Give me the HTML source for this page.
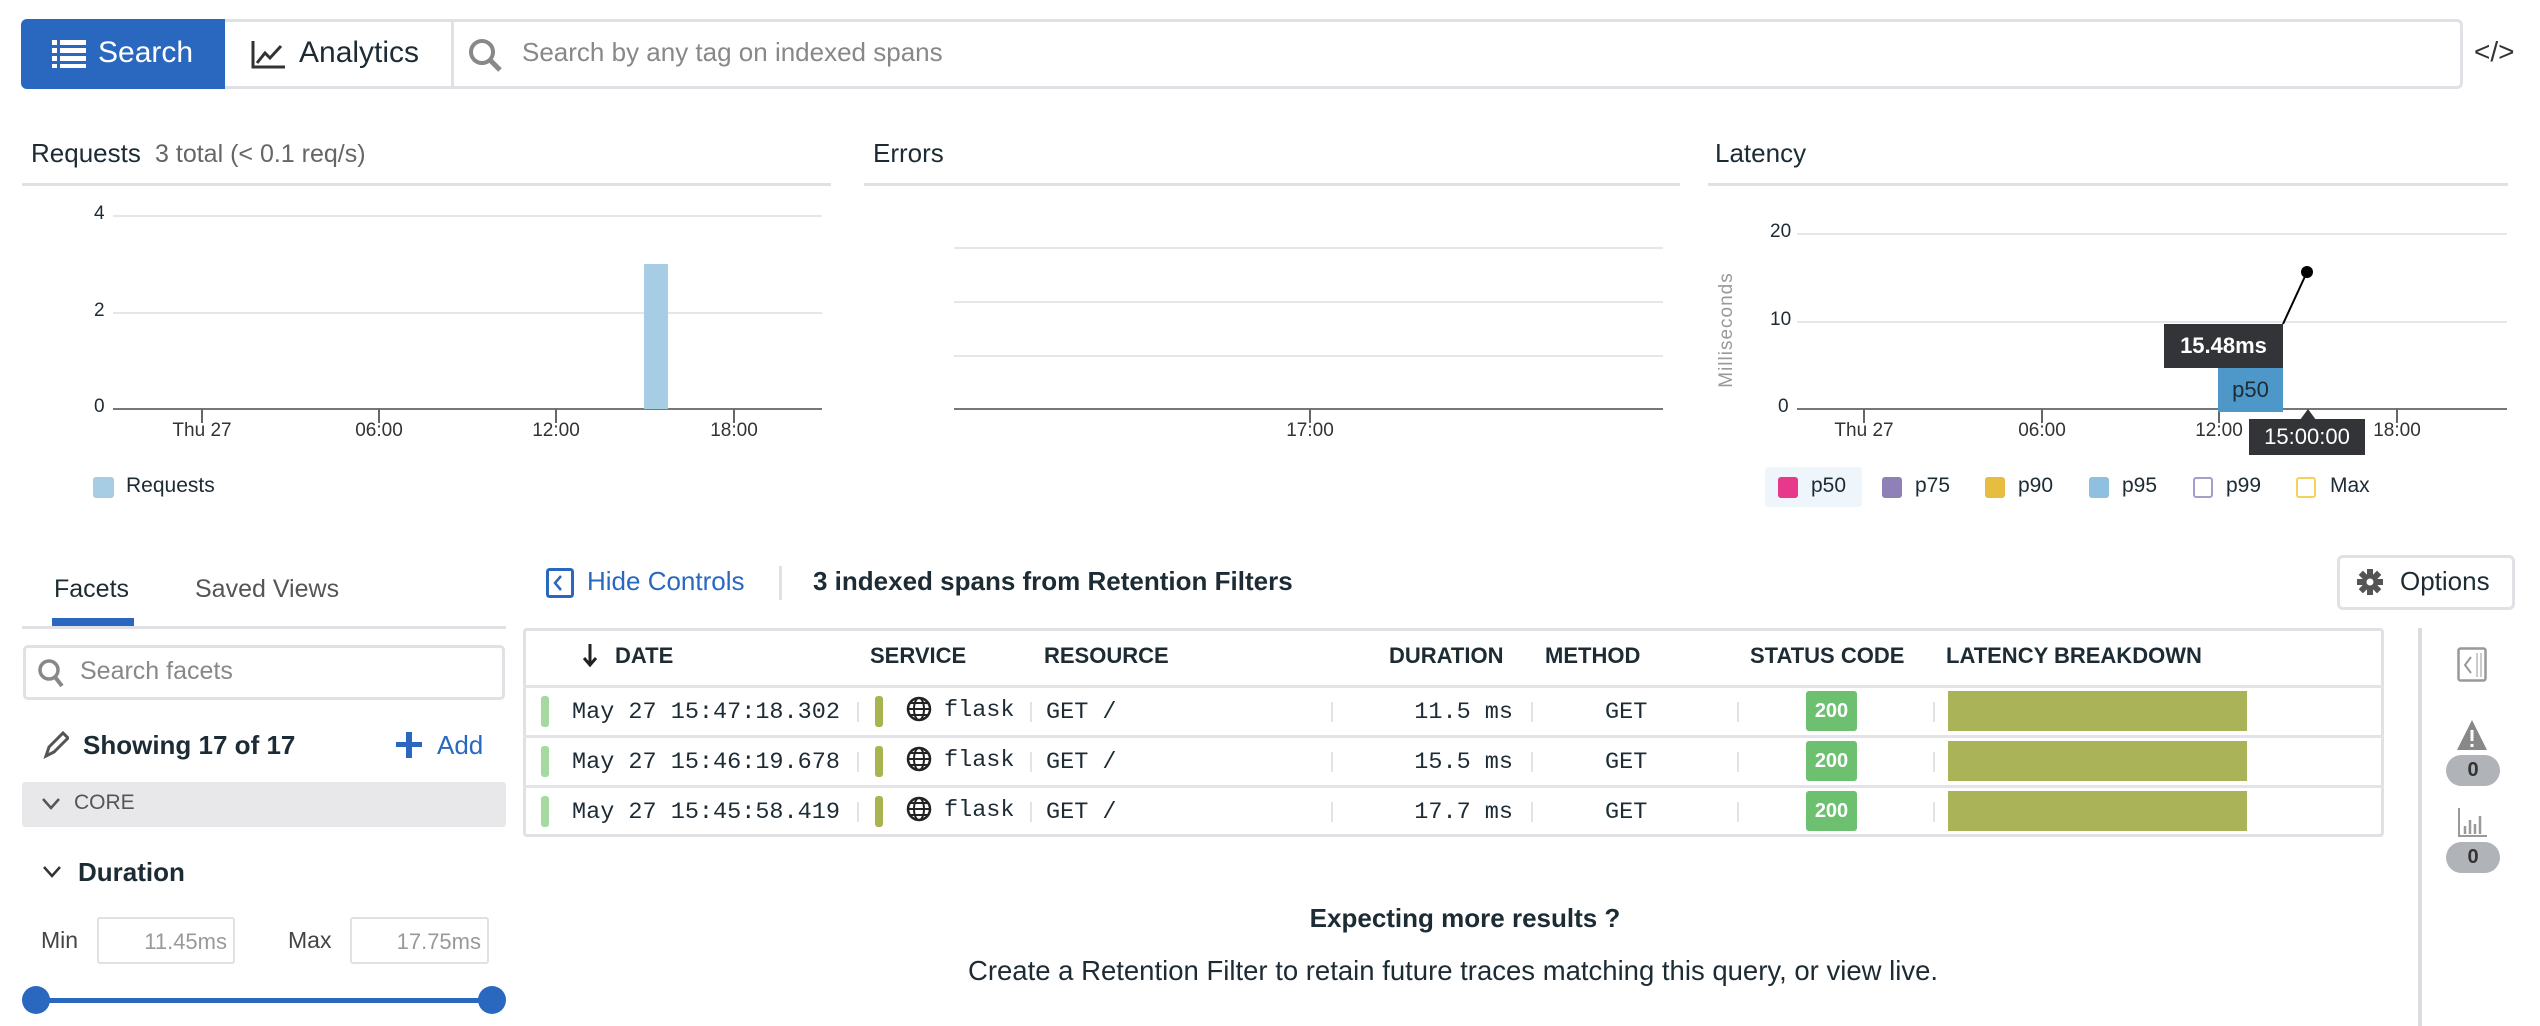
<!DOCTYPE html>
<html><head><meta charset="utf-8"><style>
*{box-sizing:border-box;margin:0;padding:0}
body{width:2540px;height:1026px;background:#fff;font-family:"Liberation Sans",sans-serif;color:#1c2b34;position:relative;overflow:hidden}
.a{position:absolute;white-space:nowrap}
.gl{position:absolute;height:2px;background:#e6e6ea}
.tick{position:absolute;font-size:19px;color:#333;transform:translateX(-50%)}
.tk{position:absolute;width:2px;height:14px;background:#666}
.hd{position:absolute;font-size:22px;font-weight:bold;color:#1c2b34;top:643px}
.mono{font-family:"Liberation Mono",monospace;font-size:23.5px;color:#1c2b34}
.sep{position:absolute;width:2px;height:20px;background:#e3e3e7}
.row{position:absolute;left:523px;width:1861px;height:50px;border-top:3px solid #e3e3e8}
</style></head><body>

<div class="a" style="left:21px;top:19px;width:2442px;height:70px;border:3px solid #e0e0e5;border-radius:6px"></div>
<div class="a" style="left:21px;top:19px;width:204px;height:70px;background:#2a68c0;border-radius:6px 0 0 6px"></div>
<svg class="a" style="left:52px;top:40px" width="34" height="28"><g fill="#fff"><rect x="0" y="0" width="5" height="5"/><rect x="8" y="0" width="26" height="5"/><rect x="0" y="8" width="5" height="5"/><rect x="8" y="8" width="26" height="5"/><rect x="0" y="16" width="5" height="5"/><rect x="8" y="16" width="26" height="5"/><rect x="0" y="24" width="5" height="4"/><rect x="8" y="24" width="26" height="4"/></g></svg>
<div class="a" style="left:98px;top:36px;font-size:30px;color:#fff">Search</div>
<div class="a" style="left:451px;top:22px;width:3px;height:64px;background:#e0e0e5"></div>
<svg class="a" style="left:251px;top:41px" width="34" height="28"><path d="M2 0V26H34" stroke="#333" stroke-width="3" fill="none"/><path d="M6 22L14 12L19 17L30 5" stroke="#333" stroke-width="3" fill="none"/></svg>
<div class="a" style="left:299px;top:36px;font-size:30px;color:#1c2b34">Analytics</div>
<svg class="a" style="left:468px;top:38px" width="36" height="34"><circle cx="14" cy="14" r="11" stroke="#888" stroke-width="4" fill="none"/><path d="M22 22L32 32" stroke="#888" stroke-width="5"/></svg>
<div class="a" style="left:522px;top:37px;font-size:26px;color:#888">Search by any tag on indexed spans</div>
<div class="a" style="left:2474px;top:36px;font-size:28px;color:#333">&lt;/&gt;</div>

<div class="a" style="left:31px;top:138px;font-size:26px">Requests <span style="color:#666;font-size:25px">&nbsp;3 total (&lt; 0.1 req/s)</span></div>
<div class="gl" style="left:22px;top:183px;width:809px;height:3px;background:#e0e0e5"></div>
<div class="gl" style="left:113px;top:215px;width:709px"></div>
<div class="gl" style="left:113px;top:312px;width:709px"></div>
<div class="gl" style="left:113px;top:408px;width:709px;background:#777"></div>
<div class="a" style="left:94px;top:203px;font-size:19px">4</div>
<div class="a" style="left:94px;top:300px;font-size:19px">2</div>
<div class="a" style="left:94px;top:396px;font-size:19px">0</div>
<div class="a" style="left:644px;top:264px;width:24px;height:145px;background:#a6cde3"></div>
<div class="tk" style="left:201px;top:409px"></div><div class="tick" style="left:202px;top:420px">Thu 27</div>
<div class="tk" style="left:378px;top:409px"></div><div class="tick" style="left:379px;top:420px">06:00</div>
<div class="tk" style="left:555px;top:409px"></div><div class="tick" style="left:556px;top:420px">12:00</div>
<div class="tk" style="left:733px;top:409px"></div><div class="tick" style="left:734px;top:420px">18:00</div>
<div class="a" style="left:93px;top:477px;width:21px;height:21px;background:#a6cde3;border-radius:3px"></div>
<div class="a" style="left:126px;top:474px;font-size:21px">Requests</div>

<div class="a" style="left:873px;top:138px;font-size:26px">Errors</div>
<div class="gl" style="left:864px;top:183px;width:816px;height:3px;background:#e0e0e5"></div>
<div class="gl" style="left:954px;top:247px;width:709px"></div>
<div class="gl" style="left:954px;top:301px;width:709px"></div>
<div class="gl" style="left:954px;top:355px;width:709px"></div>
<div class="gl" style="left:954px;top:408px;width:709px;background:#777"></div>
<div class="tk" style="left:1309px;top:409px"></div><div class="tick" style="left:1310px;top:420px">17:00</div>

<div class="a" style="left:1715px;top:138px;font-size:26px">Latency</div>
<div class="gl" style="left:1708px;top:183px;width:800px;height:3px;background:#e0e0e5"></div>
<div class="gl" style="left:1797px;top:233px;width:710px"></div>
<div class="gl" style="left:1797px;top:321px;width:710px"></div>
<div class="gl" style="left:1797px;top:408px;width:710px;background:#777"></div>
<div class="a" style="left:1770px;top:221px;font-size:19px">20</div>
<div class="a" style="left:1770px;top:309px;font-size:19px">10</div>
<div class="a" style="left:1778px;top:396px;font-size:19px">0</div>
<div class="a" style="left:1727px;top:330px;font-size:19px;color:#999;letter-spacing:1px;transform:translate(-50%,-50%) rotate(-90deg)">Milliseconds</div>
<div class="tk" style="left:1863px;top:409px"></div><div class="tick" style="left:1864px;top:420px">Thu 27</div>
<div class="tk" style="left:2041px;top:409px"></div><div class="tick" style="left:2042px;top:420px">06:00</div>
<div class="tk" style="left:2218px;top:409px"></div><div class="tick" style="left:2219px;top:420px">12:00</div>
<div class="tk" style="left:2396px;top:409px"></div><div class="tick" style="left:2397px;top:420px">18:00</div>
<svg class="a" style="left:2270px;top:260px" width="50" height="80"><path d="M13 64L37 12" stroke="#000" stroke-width="2"/><circle cx="37" cy="12" r="6" fill="#000"/></svg>
<div class="a" style="left:2164px;top:324px;width:119px;height:44px;background:#333438;color:#fff;font-weight:bold;font-size:22px;line-height:44px;text-align:center">15.48ms</div>
<div class="a" style="left:2218px;top:368px;width:65px;height:44px;background:#4e97c9;color:#1c2b34;font-size:22px;line-height:44px;text-align:center">p50</div>
<svg class="a" style="left:2300px;top:409px" width="16" height="11"><path d="M0 11L8 0L16 11Z" fill="#333438"/></svg>
<div class="a" style="left:2249px;top:419px;width:116px;height:36px;background:#333438;color:#fff;font-size:22px;line-height:36px;text-align:center">15:00:00</div>
<div class="a" style="left:1765px;top:467px;width:97px;height:40px;background:#eef5fb;border-radius:4px"></div>
<div class="a" style="left:1778px;top:477px;width:20px;height:21px;background:#e8388c;border-radius:3px"></div><div class="a" style="left:1811px;top:474px;font-size:21px">p50</div>
<div class="a" style="left:1882px;top:477px;width:20px;height:21px;background:#8f80b8;border-radius:3px"></div><div class="a" style="left:1915px;top:474px;font-size:21px">p75</div>
<div class="a" style="left:1985px;top:477px;width:20px;height:21px;background:#e6bd3f;border-radius:3px"></div><div class="a" style="left:2018px;top:474px;font-size:21px">p90</div>
<div class="a" style="left:2089px;top:477px;width:20px;height:21px;background:#8fc0e0;border-radius:3px"></div><div class="a" style="left:2122px;top:474px;font-size:21px">p95</div>
<div class="a" style="left:2193px;top:477px;width:20px;height:21px;border:2px solid #a89cc9;border-radius:3px"></div><div class="a" style="left:2226px;top:474px;font-size:21px">p99</div>
<div class="a" style="left:2296px;top:477px;width:20px;height:21px;border:2px solid #f3d257;border-radius:3px"></div><div class="a" style="left:2330px;top:474px;font-size:21px">Max</div>

<div class="a" style="left:54px;top:575px;font-size:25px">Facets</div>
<div class="a" style="left:195px;top:575px;font-size:25px;color:#555">Saved Views</div>
<div class="a" style="left:52px;top:618px;width:82px;height:8px;background:#2a68c0"></div>
<div class="a" style="left:22px;top:626px;width:484px;height:3px;background:#e0e0e5"></div>
<div class="a" style="left:23px;top:645px;width:482px;height:55px;border:3px solid #e0e0e5;border-radius:5px"></div>
<svg class="a" style="left:37px;top:658px" width="28" height="30"><circle cx="12" cy="12" r="9" stroke="#888" stroke-width="3.5" fill="none"/><path d="M18 19L25 28" stroke="#888" stroke-width="4"/></svg>
<div class="a" style="left:80px;top:657px;font-size:25px;color:#888">Search facets</div>
<svg class="a" style="left:43px;top:731px" width="26" height="28"><path d="M3 25L6 16L20 2L25 7L11 21Z" fill="none" stroke="#555" stroke-width="3"/></svg>
<div class="a" style="left:83px;top:730px;font-size:26px;font-weight:bold">Showing 17 of 17</div>
<div class="a" style="left:396px;top:742px;width:26px;height:5px;background:#2a68c0"></div>
<div class="a" style="left:406px;top:732px;width:6px;height:26px;background:#2a68c0"></div>
<div class="a" style="left:437px;top:730px;font-size:26px;color:#2a68c0">Add</div>
<div class="a" style="left:22px;top:782px;width:484px;height:45px;background:#e8e8eb;border-radius:3px"></div>
<svg class="a" style="left:42px;top:797px" width="18" height="14"><path d="M1 2L9 11L17 2" stroke="#555" stroke-width="2.5" fill="none"/></svg>
<div class="a" style="left:74px;top:791px;font-size:21px;color:#555">CORE</div>
<svg class="a" style="left:43px;top:865px" width="18" height="14"><path d="M1 2L9 11L17 2" stroke="#333" stroke-width="2.5" fill="none"/></svg>
<div class="a" style="left:78px;top:857px;font-size:26px;font-weight:bold">Duration</div>
<div class="a" style="left:41px;top:927px;font-size:23px;color:#444">Min</div>
<div class="a" style="left:97px;top:917px;width:138px;height:47px;border:2px solid #e0e0e5;border-radius:3px;font-size:22px;color:#999;text-align:right;padding:10px 6px 0 0">11.45ms</div>
<div class="a" style="left:288px;top:927px;font-size:23px;color:#444">Max</div>
<div class="a" style="left:350px;top:917px;width:139px;height:47px;border:2px solid #e0e0e5;border-radius:3px;font-size:22px;color:#999;text-align:right;padding:10px 6px 0 0">17.75ms</div>
<div class="a" style="left:35px;top:998px;width:457px;height:5px;background:#2a68c0"></div>
<div class="a" style="left:22px;top:986px;width:28px;height:28px;border-radius:50%;background:#2a68c0"></div>
<div class="a" style="left:478px;top:986px;width:28px;height:28px;border-radius:50%;background:#2a68c0"></div>

<svg class="a" style="left:546px;top:568px" width="28" height="30"><rect x="1.5" y="1.5" width="25" height="27" rx="2" stroke="#2a68c0" stroke-width="3" fill="none"/><path d="M15 8L9 15L15 22" stroke="#2a68c0" stroke-width="2.5" fill="none"/></svg>
<div class="a" style="left:587px;top:566px;font-size:26px;color:#2a68c0">Hide Controls</div>
<div class="a" style="left:779px;top:566px;width:3px;height:34px;background:#e0e0e5"></div>
<div class="a" style="left:813px;top:566px;font-size:26px;font-weight:bold">3 indexed spans from Retention Filters</div>
<div class="a" style="left:2337px;top:555px;width:178px;height:55px;border:3px solid #e0e0e5;border-radius:6px"></div>
<svg class="a" style="left:2357px;top:569px" width="26" height="26" viewBox="0 0 26 26"><g fill="#555"><circle cx="13" cy="13" r="8"/><rect x="10" y="0" width="6" height="26"/><rect x="0" y="10" width="26" height="6"/><rect x="10" y="0" width="6" height="26" transform="rotate(45 13 13)"/><rect x="10" y="0" width="6" height="26" transform="rotate(-45 13 13)"/></g><circle cx="13" cy="13" r="3.5" fill="#fff"/></svg>
<div class="a" style="left:2400px;top:566px;font-size:26px">Options</div>

<div class="a" style="left:523px;top:628px;width:1861px;height:209px;border:3px solid #e0e0e5;border-radius:4px"></div>
<svg class="a" style="left:582px;top:643px" width="16" height="24"><path d="M8 1V21M2 15L8 22L14 15" stroke="#222" stroke-width="3" fill="none"/></svg>
<div class="hd" style="left:615px">DATE</div>
<div class="hd" style="left:870px">SERVICE</div>
<div class="hd" style="left:1044px">RESOURCE</div>
<div class="hd" style="left:1389px">DURATION</div>
<div class="hd" style="left:1545px">METHOD</div>
<div class="hd" style="left:1750px">STATUS CODE</div>
<div class="hd" style="left:1946px">LATENCY BREAKDOWN</div>

<div class="row" style="top:685px"></div>
<div class="row" style="top:735px"></div>
<div class="row" style="top:785px;border-bottom:none"></div>

<div class="a" style="left:541px;top:696px;width:8px;height:31px;background:#a5d9a0;border-radius:3px"></div>
<div class="a mono" style="left:572px;top:699px">May 27 15:47:18.302</div>
<div class="sep" style="left:857px;top:702px"></div>
<div class="a" style="left:875px;top:696px;width:8px;height:31px;background:#a9b34f;border-radius:3px"></div>
<svg class="a" style="left:906px;top:696px" width="26" height="26"><circle cx="13" cy="13" r="11" stroke="#222" stroke-width="2.5" fill="none"/><ellipse cx="13" cy="13" rx="5" ry="11" stroke="#222" stroke-width="2" fill="none"/><path d="M2 13H24M4 7H22M4 19H22" stroke="#222" stroke-width="2"/></svg>
<div class="a mono" style="left:944px;top:697px">flask</div>
<div class="sep" style="left:1030px;top:702px"></div>
<div class="a mono" style="left:1046px;top:699px">GET /</div>
<div class="sep" style="left:1331px;top:702px"></div>
<div class="a mono" style="left:1513px;top:699px;transform:translateX(-100%)">11.5 ms</div>
<div class="sep" style="left:1531px;top:702px"></div>
<div class="a mono" style="left:1605px;top:699px">GET</div>
<div class="sep" style="left:1737px;top:702px"></div>
<div class="a" style="left:1806px;top:691px;width:51px;height:40px;background:#6cc070;border-radius:3px;color:#fff;font-weight:bold;font-size:20px;text-align:center;line-height:40px">200</div>
<div class="sep" style="left:1933px;top:702px"></div>
<div class="a" style="left:1948px;top:691px;width:299px;height:40px;background:#aab357"></div>

<div class="a" style="left:541px;top:746px;width:8px;height:31px;background:#a5d9a0;border-radius:3px"></div>
<div class="a mono" style="left:572px;top:749px">May 27 15:46:19.678</div>
<div class="sep" style="left:857px;top:752px"></div>
<div class="a" style="left:875px;top:746px;width:8px;height:31px;background:#a9b34f;border-radius:3px"></div>
<svg class="a" style="left:906px;top:746px" width="26" height="26"><circle cx="13" cy="13" r="11" stroke="#222" stroke-width="2.5" fill="none"/><ellipse cx="13" cy="13" rx="5" ry="11" stroke="#222" stroke-width="2" fill="none"/><path d="M2 13H24M4 7H22M4 19H22" stroke="#222" stroke-width="2"/></svg>
<div class="a mono" style="left:944px;top:747px">flask</div>
<div class="sep" style="left:1030px;top:752px"></div>
<div class="a mono" style="left:1046px;top:749px">GET /</div>
<div class="sep" style="left:1331px;top:752px"></div>
<div class="a mono" style="left:1513px;top:749px;transform:translateX(-100%)">15.5 ms</div>
<div class="sep" style="left:1531px;top:752px"></div>
<div class="a mono" style="left:1605px;top:749px">GET</div>
<div class="sep" style="left:1737px;top:752px"></div>
<div class="a" style="left:1806px;top:741px;width:51px;height:40px;background:#6cc070;border-radius:3px;color:#fff;font-weight:bold;font-size:20px;text-align:center;line-height:40px">200</div>
<div class="sep" style="left:1933px;top:752px"></div>
<div class="a" style="left:1948px;top:741px;width:299px;height:40px;background:#aab357"></div>

<div class="a" style="left:541px;top:796px;width:8px;height:31px;background:#a5d9a0;border-radius:3px"></div>
<div class="a mono" style="left:572px;top:799px">May 27 15:45:58.419</div>
<div class="sep" style="left:857px;top:802px"></div>
<div class="a" style="left:875px;top:796px;width:8px;height:31px;background:#a9b34f;border-radius:3px"></div>
<svg class="a" style="left:906px;top:796px" width="26" height="26"><circle cx="13" cy="13" r="11" stroke="#222" stroke-width="2.5" fill="none"/><ellipse cx="13" cy="13" rx="5" ry="11" stroke="#222" stroke-width="2" fill="none"/><path d="M2 13H24M4 7H22M4 19H22" stroke="#222" stroke-width="2"/></svg>
<div class="a mono" style="left:944px;top:797px">flask</div>
<div class="sep" style="left:1030px;top:802px"></div>
<div class="a mono" style="left:1046px;top:799px">GET /</div>
<div class="sep" style="left:1331px;top:802px"></div>
<div class="a mono" style="left:1513px;top:799px;transform:translateX(-100%)">17.7 ms</div>
<div class="sep" style="left:1531px;top:802px"></div>
<div class="a mono" style="left:1605px;top:799px">GET</div>
<div class="sep" style="left:1737px;top:802px"></div>
<div class="a" style="left:1806px;top:791px;width:51px;height:40px;background:#6cc070;border-radius:3px;color:#fff;font-weight:bold;font-size:20px;text-align:center;line-height:40px">200</div>
<div class="sep" style="left:1933px;top:802px"></div>
<div class="a" style="left:1948px;top:791px;width:299px;height:40px;background:#aab357"></div>

<div class="a" style="left:1465px;top:903px;font-size:26px;font-weight:bold;transform:translateX(-50%)">Expecting more results ?</div>
<div class="a" style="left:1453px;top:955px;font-size:27.5px;transform:translateX(-50%)">Create a Retention Filter to retain future traces matching this query, or view live.</div>

<div class="a" style="left:2418px;top:628px;width:4px;height:398px;background:#dcdce0"></div>
<svg class="a" style="left:2457px;top:647px" width="30" height="36"><rect x="1.5" y="1.5" width="27" height="32" rx="2" stroke="#999" stroke-width="2.5" fill="none"/><path d="M14 10L8 18L14 26" stroke="#999" stroke-width="2" fill="none"/><path d="M20 6V30M24 6V30" stroke="#bbb" stroke-width="1.5"/></svg>
<svg class="a" style="left:2456px;top:719px" width="32" height="32"><path d="M16 1L31 31H1Z" fill="#888"/><rect x="14.5" y="11" width="3" height="11" fill="#fff"/><rect x="14.5" y="25" width="3" height="3" fill="#fff"/></svg>
<div class="a" style="left:2446px;top:755px;width:54px;height:31px;border-radius:16px;background:#b0b3b7;font-size:20px;font-weight:bold;text-align:center;line-height:31px;color:#333">0</div>
<svg class="a" style="left:2457px;top:808px" width="30" height="30"><path d="M2 0V28H30" stroke="#999" stroke-width="2" fill="none"/><path d="M8 18V26M13 12V26M18 16V26M23 8V26" stroke="#999" stroke-width="2.5"/></svg>
<div class="a" style="left:2446px;top:842px;width:54px;height:31px;border-radius:16px;background:#b0b3b7;font-size:20px;font-weight:bold;text-align:center;line-height:31px;color:#333">0</div>
</body></html>
